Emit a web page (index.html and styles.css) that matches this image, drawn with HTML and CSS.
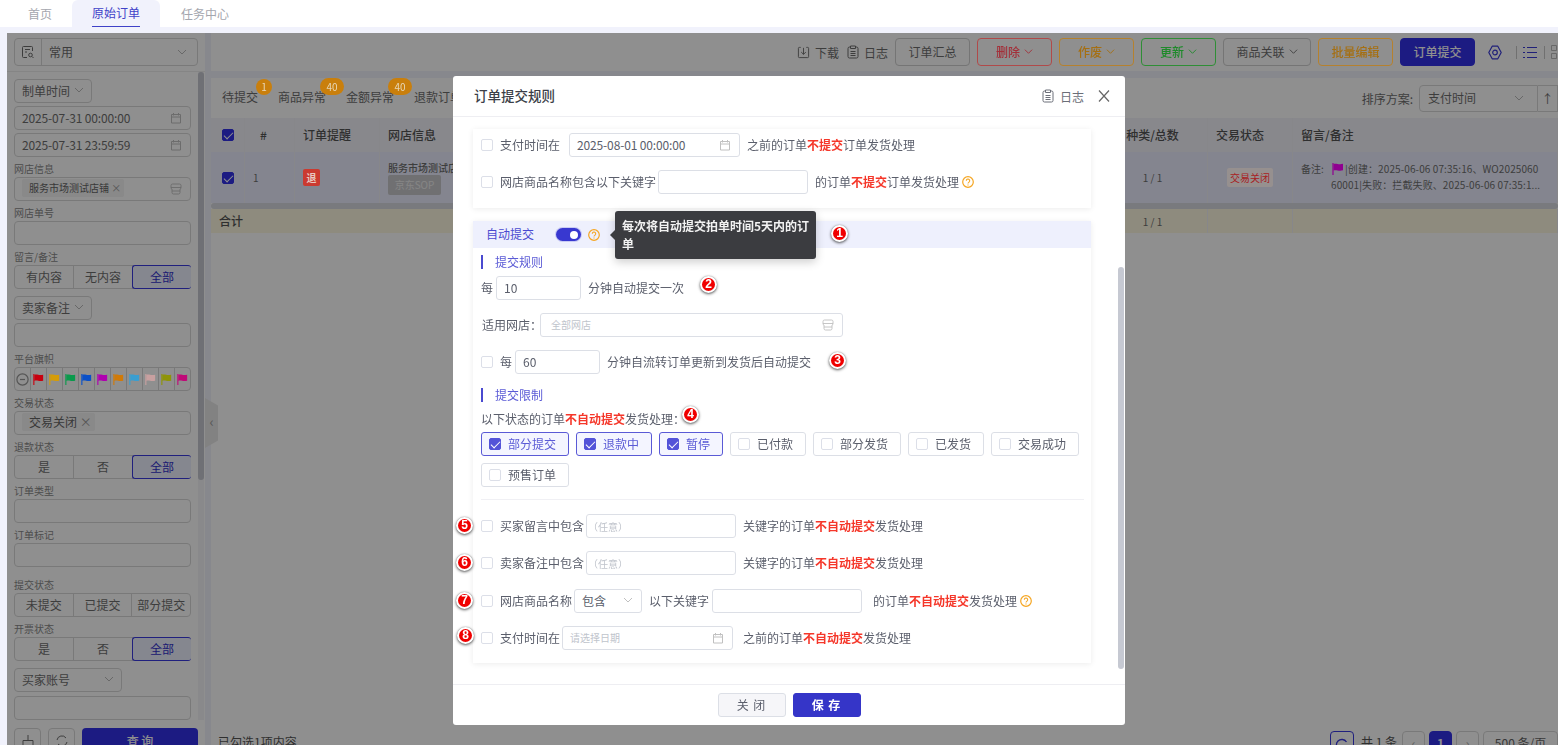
FILE: index.html
```html
<!DOCTYPE html>
<html lang="zh-CN">
<head>
  <meta charset="UTF-8">
  <meta name="viewport" content="width=device-width, initial-scale=1.0">
  <title>订单提交规则</title>
  <link rel="stylesheet" href="styles.css">
</head>
<body>
  <!-- icon sprite -->
  <svg class="sprite" xmlns="http://www.w3.org/2000/svg">
    <symbol id="i-cal" viewBox="0 0 12 12"><path d="M1.5 2.5h9v8.5h-9zM1.5 5h9M3.5 1v2.5M8.5 1v2.5" fill="none" stroke="currentColor"/></symbol>
    <symbol id="i-store" viewBox="0 0 12 12"><path d="M2.5 1h7a1.5 1.5 0 0 1 1.5 1.5V5a1.2 1.2 0 0 1-1 1v3.5A1.5 1.5 0 0 1 8.500 11h-5A1.500 1.500 0 0 1 2 9.500V6a1.200 1.200 0 0 1-1-1V2.500A1.500 1.500 0 0 1 2.500 1zM1 4.500h10M2 8h8" fill="none" stroke="currentColor" stroke-width=".9"/></symbol>
    <symbol id="i-chev" viewBox="0 0 10 10"><path d="M1 3l4 4 4-4" fill="none" stroke="currentColor"/></symbol>
    <symbol id="i-clip" viewBox="0 0 12 14"><path d="M3.500 2H2.500A1.500 1.500 0 0 0 1 3.500v8A1.500 1.500 0 0 0 2.500 13h7a1.500 1.500 0 0 0 1.500-1.500v-8A1.500 1.500 0 0 0 9.500 2H8.500M3.500 1h5v2.500h-5zM3.500 6.500h5M3.500 8.500h5M3.500 10.500h5" fill="none" stroke="currentColor"/></symbol>
    <symbol id="i-down" viewBox="0 0 14 14"><path d="M4 1.500H2.500a1 1 0 0 0-1 1v9a1 1 0 0 0 1 1h9a1 1 0 0 0 1-1v-9a1 1 0 0 0-1-1H10M7 2v7M4.500 6.500L7 9l2.500-2.500" fill="none" stroke="currentColor"/></symbol>
    <symbol id="i-help" viewBox="0 0 12 12"><circle cx="6" cy="6" r="5.300" fill="none" stroke="currentColor" stroke-width="1.200"/><path d="M4.300 4.700a1.700 1.700 0 1 1 2.700 1.400c-.7.500-1 .8-1 1.500M6 8.600v1" fill="none" stroke="currentColor" stroke-width="1.100"/></symbol>
    <symbol id="i-flag" viewBox="0 0 14 14"><path d="M2 1v12" fill="none" stroke="currentColor" stroke-width="1.200"/><path d="M2.500 2c3-1 5 1 9.500-.2v6.500c-4.500 1.200-6.500-.8-9.500.2z" fill="currentColor"/></symbol>
  </svg>

  <header class="topnav">
    <a class="topnav-item">首页</a>
    <a class="topnav-item active"><span>原始订单</span></a>
    <a class="topnav-item">任务中心</a>
  </header>

  <div class="layout">
    <aside class="side">
      <div class="side-top">
        <div class="picker">
          <span class="picker-icon">
            <svg width="14" height="14" viewBox="0 0 14 14" fill="none" stroke="currentColor"><path d="M11.500 6V2.500a1 1 0 0 0-1-1h-8a1 1 0 0 0-1 1v9a1 1 0 0 0 1 1H6M4 4.500h5M4 7h2"/><circle cx="9.500" cy="10" r="1.800"/><path d="M11 11.500l1.500 1.500"/></svg>
          </span>
          <span class="picker-text">常用</span>
          <svg class="chev" width="10" height="10"><use href="#i-chev"/></svg>
        </div>
      </div>
      <div class="side-form">
        <div class="sel sel-78">制单时间<svg class="chev" width="10" height="10"><use href="#i-chev"/></svg></div>
        <div class="box gap-3 date">2025-07-31 00:00:00<svg class="box-icon" width="12" height="12"><use href="#i-cal"/></svg></div>
        <div class="box gap-3 date">2025-07-31 23:59:59<svg class="box-icon" width="12" height="12"><use href="#i-cal"/></svg></div>

        <div class="lab">网店信息</div>
        <div class="box"><span class="pill">服务市场测试店铺 <i>×</i></span><svg class="box-icon" width="12" height="12"><use href="#i-store"/></svg></div>
        <div class="lab">网店单号</div>
        <div class="box"></div>
        <div class="lab">留言/备注</div>
        <div class="seg"><span>有内容</span><span>无内容</span><span class="on">全部</span></div>

        <div class="sel sel-78 gap-7">卖家备注<svg class="chev" width="10" height="10"><use href="#i-chev"/></svg></div>
        <div class="box gap-3"></div>
        <div class="lab">平台旗帜</div>
        <div class="flags">
          <span class="flag-none"><svg width="13" height="13" viewBox="0 0 13 13" fill="none" stroke="currentColor" stroke-width="1.200"><circle cx="6.500" cy="6.500" r="5.600"/><path d="M4 6.500h5"/></svg></span>
          <span class="flag c1"><svg width="13" height="13"><use href="#i-flag"/></svg></span>
          <span class="flag c2"><svg width="13" height="13"><use href="#i-flag"/></svg></span>
          <span class="flag c3"><svg width="13" height="13"><use href="#i-flag"/></svg></span>
          <span class="flag c4"><svg width="13" height="13"><use href="#i-flag"/></svg></span>
          <span class="flag c5"><svg width="13" height="13"><use href="#i-flag"/></svg></span>
          <span class="flag c6"><svg width="13" height="13"><use href="#i-flag"/></svg></span>
          <span class="flag c7"><svg width="13" height="13"><use href="#i-flag"/></svg></span>
          <span class="flag c8"><svg width="13" height="13"><use href="#i-flag"/></svg></span>
          <span class="flag c9"><svg width="13" height="13"><use href="#i-flag"/></svg></span>
          <span class="flag c10"><svg width="13" height="13"><use href="#i-flag"/></svg></span>
        </div>
        <div class="lab">交易状态</div>
        <div class="box"><span class="pill">交易关闭 <i>×</i></span></div>
        <div class="lab">退款状态</div>
        <div class="seg"><span>是</span><span>否</span><span class="on">全部</span></div>
        <div class="lab">订单类型</div>
        <div class="box"></div>
        <div class="lab">订单标记</div>
        <div class="box"></div>

        <div class="lab gap-10">提交状态</div>
        <div class="seg"><span>未提交</span><span>已提交</span><span>部分提交</span></div>
        <div class="lab">开票状态</div>
        <div class="seg"><span>是</span><span>否</span><span class="on">全部</span></div>

        <div class="sel sel-108 gap-7">买家账号<svg class="chev" width="10" height="10"><use href="#i-chev"/></svg></div>
        <div class="box gap-4"></div>

        <div class="side-btns">
          <span class="btn-sq">
            <svg width="14" height="14" viewBox="0 0 14 14" fill="none" stroke="currentColor"><path d="M7 1v5M2 6.500h10v6H2z"/></svg>
          </span>
          <span class="btn-sq">
            <svg width="14" height="14" viewBox="0 0 14 14" fill="none" stroke="currentColor"><path d="M2 6a5 5 0 0 1 9-2M12 8a5 5 0 0 1-9 2"/></svg>
          </span>
          <span class="btn-query">查 询</span>
        </div>
      </div>
      <div class="side-track"></div>
      <div class="side-thumb"></div>
    </aside>
    <div class="side-handle">‹</div>

    <main class="content">
      <div class="toolbar">
        <span class="tool-link"><svg width="13" height="13"><use href="#i-down"/></svg>下载</span>
        <span class="tool-link last"><svg width="12" height="14"><use href="#i-clip"/></svg>日志</span>
        <span class="tbtn w75">订单汇总</span>
        <span class="tbtn w75 red lift">删除<svg width="9" height="9"><use href="#i-chev"/></svg></span>
        <span class="tbtn w75 orange lift">作废<svg width="9" height="9"><use href="#i-chev"/></svg></span>
        <span class="tbtn w75 green lift">更新<svg width="9" height="9"><use href="#i-chev"/></svg></span>
        <span class="tbtn w88">商品关联<svg width="9" height="9"><use href="#i-chev"/></svg></span>
        <span class="tbtn w75 orange lift">批量编辑</span>
        <span class="tbtn w75 solid">订单提交</span>
        <svg class="tool-gear" width="14" height="15" viewBox="0 0 14 15" fill="none" stroke="currentColor" stroke-width="1.200"><path d="M4.200 1.200h5.600L13.200 7.500 9.800 13.800H4.200L.8 7.500z" stroke-linejoin="round"/><circle cx="7" cy="7.500" r="2.300"/></svg>
        <span class="tool-sep first"></span>
        <svg class="tool-list" width="14" height="13" viewBox="0 0 14 13" fill="none" stroke="currentColor"><path d="M0 1.500h2M4 1.500h10M0 6.500h2M4 6.500h10M0 11.500h2M4 11.500h10"/></svg>
        <span class="tool-sep"></span>
        <svg class="tool-grid" width="12" height="14" viewBox="0 0 12 14" fill="none" stroke="currentColor"><path d="M.5.500h5v5h-5zM.5 8.500h5v5h-5z"/></svg>
      </div>

      <section class="panel">
        <div class="tabs">
          <span class="tab">待提交<em class="tab-badge one">1</em></span>
          <span class="tab">商品异常<em class="tab-badge">40</em></span>
          <span class="tab">金额异常<em class="tab-badge">40</em></span>
          <span class="tab">退款订单</span>
          <div class="sort">
            <span>排序方案:</span>
            <div class="sort-sel">支付时间<svg class="chev" width="10" height="10"><use href="#i-chev"/></svg></div>
            <div class="sort-dir">↑</div>
          </div>
        </div>

        <div class="trow thead">
          <div class="cell"><span class="cb dark"></span></div>
          <div class="cell hash">#</div>
          <div class="cell">订单提醒</div>
          <div class="cell">网店信息</div>
          <div class="cell center">种类/总数</div>
          <div class="cell">交易状态</div>
          <div class="cell">留言/备注</div>
        </div>
        <div class="trow tbody">
          <div class="cell"><span class="cb dark"></span></div>
          <div class="cell">1</div>
          <div class="cell"><span class="tag-back lift">退</span></div>
          <div class="cell shop">
            <span class="shop-name">服务市场测试店铺</span>
            <span class="shop-tag">京东SOP</span>
          </div>
          <div class="cell center">1 / 1</div>
          <div class="cell center"><span class="tag-status lift">交易关闭</span></div>
          <div class="cell remark">
            <span class="remark-lab">备注:</span>
            <span class="remark-text"><svg class="remark-flag lift" width="14" height="14"><use href="#i-flag"/></svg>|创建：2025-06-06 07:35:16、WO2025060<br>60001|失败：拦截失败、2025-06-06 07:35:1...</span>
          </div>
        </div>
        <div class="tbar"></div>
        <div class="trow tfoot">
          <div class="cell sum">合计</div>
          <div class="cell center">1 / 1</div>
          <div class="cell"></div>
          <div class="cell"></div>
        </div>

        <div class="pager-row">
          <span>已勾选1项内容</span>
          <div class="pager">
            <span class="pg refresh">
              <svg width="14" height="14" viewBox="0 0 14 14" fill="none" stroke="currentColor" stroke-width="1.300"><path d="M11.500 4A5.500 5.500 0 1 0 12 9"/></svg>
            </span>
            <span class="pg-total">共 1 条</span>
            <span class="pg">‹</span>
            <span class="pg on">1</span>
            <span class="pg">›</span>
            <span class="pg size">500 条/页</span>
          </div>
        </div>
      </section>
    </main>
  </div>

  <div class="mask"></div>

  <div class="modal">
    <div class="modal-head">
      <span class="modal-title">订单提交规则</span>
      <span class="modal-log"><svg width="12" height="14"><use href="#i-clip"/></svg>日志</span>
      <svg class="modal-x" width="12" height="12" viewBox="0 0 12 12" fill="none" stroke="currentColor" stroke-width="1.200"><path d="M1 .5l10 11M11 .5L1 11.500"/></svg>
    </div>

    <div class="modal-body">
      <div class="card card-top">
        <div class="row">
          <span class="cb"></span><span class="t">支付时间在</span>
          <div class="inp w171 ml-9 mr-7 date">2025-08-01 00:00:00<svg class="box-icon" width="12" height="12"><use href="#i-cal"/></svg></div>
          <span>之前的订单<b>不提交</b>订单发货处理</span>
        </div>
        <div class="row mt-13">
          <span class="cb"></span><span class="t">网店商品名称包含以下关键字</span>
          <input class="inp w150 ml-2 mr-7">
          <span>的订单<b>不提交</b>订单发货处理</span>
          <svg class="help" width="12" height="12"><use href="#i-help"/></svg>
        </div>
      </div>

      <div class="card card-auto">
        <div class="auto-head">
          <span>自动提交</span>
          <span class="toggle"></span>
          <svg class="help" width="12" height="12"><use href="#i-help"/></svg>
        </div>
        <div class="tip">每次将自动提交拍单时间5天内的订<br>单</div>

        <div class="auto-body">
          <div class="sec-title">提交规则</div>
          <div class="row">
            <span>每</span>
            <input class="inp w85 ml-3 mr-7" value="10">
            <span>分钟自动提交一次</span>
          </div>
          <div class="row mt-13">
            <span class="shop-lab">适用网店：</span>
            <div class="inp w303 ph">全部网店<svg class="box-icon" width="12" height="12"><use href="#i-store"/></svg></div>
          </div>
          <div class="row mt-13">
            <span class="cb"></span><span class="t">每</span>
            <input class="inp w85 ml-3 mr-7" value="60">
            <span>分钟自流转订单更新到发货后自动提交</span>
          </div>

          <div class="sec-title mt-14">提交限制</div>
          <div class="hint">以下状态的订单<b>不自动提交</b>发货处理：</div>
          <div class="chips">
            <label class="chip on"><span class="cb"></span>部分提交</label>
            <label class="chip on"><span class="cb"></span>退款中</label>
            <label class="chip on"><span class="cb"></span>暂停</label>
            <label class="chip"><span class="cb"></span>已付款</label>
            <label class="chip"><span class="cb"></span>部分发货</label>
            <label class="chip"><span class="cb"></span>已发货</label>
            <label class="chip"><span class="cb"></span>交易成功</label>
            <label class="chip"><span class="cb"></span>预售订单</label>
          </div>
          <div class="rule"></div>

          <div class="row">
            <span class="cb"></span><span class="t">买家留言中包含</span>
            <input class="inp w150 ml-2 mr-7 kw" placeholder="（任意）">
            <span>关键字的订单<b>不自动提交</b>发货处理</span>
          </div>
          <div class="row mt-13">
            <span class="cb"></span><span class="t">卖家备注中包含</span>
            <input class="inp w150 ml-2 mr-7 kw" placeholder="（任意）">
            <span>关键字的订单<b>不自动提交</b>发货处理</span>
          </div>
          <div class="row mt-14">
            <span class="cb"></span><span class="t">网店商品名称</span>
            <div class="inp w68 ml-2 mr-7">包含<svg class="chev box-icon" width="10" height="10"><use href="#i-chev"/></svg></div>
            <span>以下关键字</span>
            <input class="inp w150 ml-3 mr-11">
            <span>的订单<b>不自动提交</b>发货处理</span>
            <svg class="help" width="12" height="12"><use href="#i-help"/></svg>
          </div>
          <div class="row mt-13">
            <span class="cb"></span><span class="t">支付时间在</span>
            <div class="inp w171 ml-2 mr-10 ph pl-7">请选择日期<svg class="box-icon" width="12" height="12"><use href="#i-cal"/></svg></div>
            <span>之前的订单<b>不自动提交</b>发货处理</span>
          </div>
        </div>

        <!-- numbered notes drawn on top of the form -->
        <span class="note n1">1</span>
        <span class="note n2">2</span>
        <span class="note n3">3</span>
        <span class="note n4">4</span>
        <span class="note n5">5</span>
        <span class="note n6">6</span>
        <span class="note n7">7</span>
        <span class="note n8">8</span>
      </div>

      <div class="modal-thumb"></div>
    </div>

    <div class="modal-foot">
      <span class="mbtn">关 闭</span>
      <span class="mbtn primary">保 存</span>
    </div>
  </div>
</body>
</html>
```

FILE: styles.css
```css
* {
  box-sizing: border-box;
}

html, body {
  height: 100%;
}

body {
  margin: 0;
  background-color: #f1f2fc;
  font-family: "Noto Sans CJK SC", "Noto Sans", sans-serif;
  font-size: 12px;
  color: #666;
  overflow: hidden;
}

.sprite {
  display: none;
}

.lift {
  position: relative;
  z-index: 11;
}

.date {
  letter-spacing: -0.14px;
}

/* Top navigation */
.topnav {
  display: flex;
  height: 27px;
  padding-left: 8px;
  background-color: #fff;
}

.topnav-item {
  display: flex;
  align-items: center;
  justify-content: center;
  padding: 0 20px;
  color: #a4a6ae;
  line-height: 26px;
}

.topnav-item.active {
  margin-right: 1px;
  background-color: #f1f2fc;
  border-radius: 6px 6px 0 0;
  color: #3f41c8;
  align-items: stretch;
}

.topnav-item.active span {
  border-bottom: 1px solid #3f41c8;
  height: 27px;
}

/* Page behind the dialog */
.layout {
  display: flex;
  height: 712px;
  margin-top: 6px;
  margin-left: 7px;
  color: #6e6e6e;
}

.side {
  position: relative;
  width: 198px;
  flex: none;
  background-color: #fff;
  overflow: hidden;
}

.side-top {
  height: 39px;
  padding: 5px 7px;
  border-bottom: 1px solid #eee;
}

.picker {
  display: flex;
  align-items: center;
  height: 28px;
  border: 1px solid #d8d8d8;
  border-radius: 4px;
}

.picker-icon {
  display: flex;
  align-items: center;
  justify-content: center;
  width: 27px;
  height: 100%;
  border-right: 1px solid #d8d8d8;
}

.picker-text {
  flex: 1;
  padding: 0 0 2px 7px;
}

.chev {
  margin-left: auto;
  color: #b9b9b9;
  flex: none;
}

.picker .chev {
  margin-right: 10px;
}

.side-form {
  width: 184px;
  padding: 7px 0 0 7px;
}

.sel, .box {
  position: relative;
  display: flex;
  align-items: center;
  height: 24px;
  border: 1px solid #d8d8d8;
  border-radius: 4px;
  padding: 0 7px 2px;
  background-color: #fff;
}

.box {
  width: 177px;
}

.sel-78 {
  width: 78px;
}

.sel-108 {
  width: 108px;
}

.box-icon {
  position: absolute;
  right: 8px;
  top: 5px;
  color: #c0c0c0;
}

.gap-3 { margin-top: 3px; }
.gap-4 { margin-top: 4px; }
.gap-7 { margin-top: 7px; }
.gap-10 { margin-top: 10px !important; }

.lab {
  margin-top: 4px;
  font-size: 10px;
  line-height: 16px;
  color: #8a8a8a;
}

.pill {
  padding: 0 3px 0 7px;
  background-color: #f4f4f4;
  border-radius: 2px;
  line-height: 18px;
  font-size: 10px;
  color: #666;
}

.box .pill:last-child {
  font-size: 12px;
}

.pill i {
  font-style: normal;
  color: #999;
}

.seg {
  display: flex;
  width: 177px;
  height: 24px;
  border: 1px solid #d8d8d8;
  border-radius: 4px;
}

.seg span {
  flex: 1;
  display: flex;
  align-items: center;
  justify-content: center;
  padding-bottom: 2px;
  border-right: 1px solid #d8d8d8;
}

.seg span:last-child {
  border-right: 0;
}

.seg .on {
  margin: -1px;
  border: 1px solid #3a3ae0;
  border-radius: 3px;
  background-color: #eef0ff;
  color: #3333cc;
}

.flags {
  display: flex;
  width: 177px;
  height: 24px;
  margin-bottom: 1px;
  border: 1px solid #d8d8d8;
  border-radius: 4px;
}

.flags span {
  flex: 1;
  display: flex;
  align-items: center;
  justify-content: center;
  border-right: 1px solid #d8d8d8;
}

.flags span:last-child {
  border-right: 0;
}

.flags svg {
  position: relative;
  z-index: 11;
}

.flag-none { color: #555; }
.c1 { color: #c8000f; }
.c2 { color: #d59c08; }
.c3 { color: #0a9a4c; }
.c4 { color: #0a50c8; }
.c5 { color: #b000b0; }
.c6 { color: #d07a08; }
.c7 { color: #3a9ed0; }
.c8 { color: #c8a0a0; }
.c9 { color: #8f9408; }
.c10 { color: #c00a78; }

.side-btns {
  display: flex;
  gap: 7px;
  width: 184px;
  margin-top: 8px;
}

.btn-sq {
  display: flex;
  justify-content: center;
  width: 27px;
  height: 28px;
  padding-top: 5px;
  border: 1px solid #d8d8d8;
  border-radius: 4px;
}

.btn-query {
  flex: 1;
  height: 28px;
  border-radius: 4px;
  background-color: #3331e8;
  color: #fff;
  text-align: center;
  line-height: 26px;
  font-weight: 500;
}

.side-track {
  position: absolute;
  left: 191px;
  top: 39px;
  width: 6px;
  height: 648px;
  background-color: #f4f4f8;
}

.side-thumb {
  position: absolute;
  left: 191px;
  top: 39px;
  width: 6px;
  height: 408px;
  border-radius: 3px;
  background-color: #c6c8d0;
}

.side-handle {
  position: absolute;
  left: 205px;
  top: 398px;
  width: 13px;
  height: 50px;
  background-color: #e8e8e8;
  clip-path: polygon(0 0, 100% 15%, 100% 85%, 0 100%);
  color: #999;
  font-size: 14px;
  line-height: 46px;
  text-align: center;
}

.content {
  flex: 1;
  min-width: 0;
  margin-left: 6px;
  display: flex;
  flex-direction: column;
}

/* Toolbar */
.toolbar {
  display: flex;
  align-items: center;
  height: 38px;
  padding-left: 586px;
  background-color: #fff;
  overflow: hidden;
  flex: none;
}

.tool-link {
  display: flex;
  align-items: center;
  gap: 5px;
  margin-right: 8px;
  white-space: nowrap;
}

.tool-link.last {
  margin-right: 7px;
}

.tbtn {
  display: flex;
  align-items: center;
  justify-content: center;
  gap: 4px;
  flex: none;
  height: 28px;
  margin-right: 7px;
  padding-bottom: 2px;
  border: 1px solid #d0d0d0;
  border-radius: 4px;
  white-space: nowrap;
}

.w75 { width: 75px; }
.w88 { width: 88px; }

.tbtn.red {
  border-color: #b04a4a;
  color: #a3303a;
  font-weight: 500;
}

.tbtn.orange {
  border-color: #b5812e;
  color: #a56f12;
  font-weight: 500;
}

.tbtn.green {
  border-color: #2f8e36;
  color: #1e8a2a;
  font-weight: 500;
}

.tbtn.solid {
  background-color: #3331e8;
  border-color: #3331e8;
  color: #fff;
  font-weight: 500;
}

.tool-gear {
  margin-left: 6px;
  flex: none;
  color: #3a3ad8;
}

.tool-sep {
  flex: none;
  width: 1px;
  height: 13px;
  margin: 0 6px 0 7px;
  background-color: #c8c8c8;
}

.tool-sep.first {
  margin-left: 14px;
}

.tool-list {
  flex: none;
  color: #3a3ad8;
}

.tool-grid {
  flex: none;
  color: #bbb;
}

/* Order list */
.panel {
  flex: 1;
  margin-top: 7px;
  display: flex;
  flex-direction: column;
  background-color: #fff;
  overflow: hidden;
}

.tabs {
  display: flex;
  gap: 20px;
  height: 40px;
  padding-left: 11px;
  flex: none;
}

.tab {
  position: relative;
  padding-top: 10px;
  line-height: 18px;
  white-space: nowrap;
}

.tab-badge {
  position: absolute;
  z-index: 11;
  left: 42px;
  top: 0;
  width: 24px;
  height: 17px;
  border-radius: 9px;
  background-color: #c97f0c;
  color: #e8d8b8;
  font-style: normal;
  font-size: 10px;
  line-height: 17px;
  text-align: center;
}

.tab-badge.one {
  left: 34px;
  top: 1px;
  width: 16px;
  height: 16px;
  line-height: 16px;
}

.sort {
  display: flex;
  align-items: center;
  height: 27px;
  margin: 7px 0 0 auto;
}

.sort > span {
  margin-right: 6px;
  white-space: nowrap;
}

.sort-sel {
  display: flex;
  align-items: center;
  width: 119px;
  height: 27px;
  padding: 0 8px 2px;
  border: 1px solid #d8d8d8;
  border-radius: 4px 0 0 4px;
}

.sort-sel .chev {
  margin-right: 5px;
}

.sort-dir {
  width: 20px;
  height: 27px;
  border: 1px solid #d8d8d8;
  border-left: 0;
  text-align: center;
  line-height: 25px;
}

.trow {
  display: grid;
  grid-template-columns: 34px 50px 85px 718px 110px 85px 265px;
  flex: none;
}

.cell {
  display: flex;
  align-items: center;
  padding: 0 8px;
  border-right: 1px solid #f0f0f6;
  white-space: nowrap;
  overflow: hidden;
}

.cell.center {
  justify-content: center;
}

.thead {
  height: 34px;
  background-color: #f2f3fa;
  color: #555;
  font-weight: 500;
}

.thead .cell {
  padding-bottom: 2px;
}

.thead .hash {
  padding-left: 15px;
}

.tbody {
  height: 51px;
  background-color: #eceeff;
  font-size: 10px;
}

.tbody .cell:first-child, .thead .cell:first-child {
  padding: 0 0 0 11px;
}

.tag-back {
  width: 17px;
  height: 17px;
  border-radius: 2px;
  background-color: #cb3a30;
  color: #e8c8c0;
  text-align: center;
  line-height: 17px;
  font-size: 10px;
  font-weight: 700;
}

.shop {
  flex-direction: column;
  align-items: flex-start;
  justify-content: center;
}

.shop-name {
  font-weight: 500;
  line-height: 14px;
}

.shop-tag {
  width: 53px;
  height: 20px;
  border-radius: 2px;
  background-color: #c8c8cc;
  color: #eee;
  text-align: center;
  line-height: 20px;
}

.tag-status {
  padding: 0 3px;
  height: 19px;
  background-color: #96908f;
  border-radius: 2px;
  color: #a8201f;
  line-height: 19px;
}

.remark {
  align-items: flex-start;
  padding-top: 9px;
  line-height: 16px;
}

.remark-lab {
  width: 30px;
  flex: none;
}

.remark-text {
  letter-spacing: 0.1px;
}

.remark-flag {
  color: #900090;
  vertical-align: -3px;
}

.tbar {
  height: 6px;
  flex: none;
  background-color: #d8dae0;
  border-radius: 3px;
}

.tfoot {
  grid-template-columns: 887px 110px 85px 265px;
  height: 24px;
  background-color: #fdf8e0;
}

.tfoot .sum {
  font-weight: 500;
  color: #555;
  padding-bottom: 2px;
}

.tfoot .center {
  font-size: 10px;
}

.pager-row {
  display: flex;
  height: 14px;
  margin-top: auto;
  padding-left: 7px;
  line-height: 22px;
  color: #555;
  flex: none;
}

.pager {
  display: flex;
  gap: 4px;
  margin-left: auto;
}

.pg {
  display: block;
  width: 23px;
  height: 24px;
  border: 1px solid #d8d8d8;
  border-radius: 4px;
  text-align: center;
  color: #aaa;
}

.pg.on {
  background-color: #3331e8;
  border-color: #3331e8;
  color: #fff;
  font-weight: 700;
}

.pg.refresh {
  width: 24px;
  border-color: #3a3ae0;
  color: #3a3ae0;
  padding-top: 4px;
}

.pg-total {
  margin: 0 1px 0 3px;
  white-space: nowrap;
}

.pg.size {
  width: 75px;
  color: #666;
  white-space: nowrap;
}

/* Overlay */
.mask {
  position: fixed;
  left: 7px;
  top: 33px;
  right: 0;
  bottom: 0;
  z-index: 10;
  background-color: rgba(0, 0, 0, 0.44);
}

.modal {
  position: fixed;
  left: 453px;
  top: 76px;
  z-index: 20;
  display: flex;
  flex-direction: column;
  width: 672px;
  height: 649px;
  background-color: #fff;
  border-radius: 3px;
  color: #5a5e6b;
}

.modal-head {
  display: flex;
  align-items: center;
  flex: none;
  height: 41px;
  padding: 0 15px 0 21px;
  border-bottom: 1px solid #eeeef2;
}

.modal-title {
  padding-bottom: 2px;
  font-size: 13.500px;
  font-weight: 500;
  color: #3c3f48;
}

.modal-log {
  display: flex;
  align-items: center;
  gap: 6px;
  margin-left: auto;
  color: #6b6e78;
}

.modal-x {
  margin-left: 14px;
  color: #666;
}

.modal-body {
  position: relative;
  flex: 1;
  padding: 12px 0 0 20px;
}

.modal-thumb {
  position: absolute;
  right: 1px;
  top: 150px;
  width: 6px;
  height: 402px;
  border-radius: 3px;
  background-color: #c6c9d2;
}

.card {
  width: 618px;
  background-color: #fff;
  box-shadow: 0 1px 6px rgba(0, 0, 0, 0.08);
}

.card-top {
  padding: 4px 0 14px 8px;
}

.card-auto {
  position: relative;
  margin-top: 13px;
}

.row {
  display: flex;
  align-items: center;
  height: 24px;
  white-space: nowrap;
}

.row > span:not(.cb) {
  padding-bottom: 2px;
}

.cb {
  display: inline-block;
  position: relative;
  width: 12px;
  height: 12px;
  flex: none;
  border: 1px solid #dcdfe8;
  border-radius: 2px;
  background-color: #fff;
}

.t {
  margin-left: 7px;
}

.row b, .hint b {
  color: #f5372a;
  font-weight: 700;
}

.inp {
  position: relative;
  display: flex;
  align-items: center;
  height: 24px;
  padding: 0 7px 2px;
  border: 1px solid #dcdfe6;
  border-radius: 3px;
  background-color: #fff;
  font: inherit;
  color: #5a5e6b;
  outline: none;
  flex: none;
}

.ph {
  font-size: 10px;
  color: #c0c4cc;
  padding-left: 10px;
}

.ph.pl-7 {
  padding-left: 7px;
}

.kw {
  padding-left: 1px;
}

.kw::placeholder {
  font-size: 10px;
  color: #c0c4cc;
}

.w68 { width: 68px; }
.w85 { width: 85px; }
.w150 { width: 150px; }
.w171 { width: 171px; }
.w303 { width: 303px; }

.ml-2 { margin-left: 2px; }
.ml-3 { margin-left: 3px; }
.ml-9 { margin-left: 9px; }
.mr-7 { margin-right: 7px; }
.mr-10 { margin-right: 10px; }
.mr-11 { margin-right: 11px; }
.mt-13 { margin-top: 13px; }
.mt-14 { margin-top: 14px !important; }

.help {
  margin-left: 3px;
  flex: none;
  color: #f5a623;
}

.auto-head {
  display: flex;
  align-items: center;
  height: 27px;
  padding-left: 13px;
  background-color: #eef0fd;
  color: #4a4ad0;
}

.auto-head > span:first-child {
  padding-bottom: 2px;
}

.auto-head .help {
  margin-left: 7px;
}

.toggle {
  display: flex;
  align-items: center;
  justify-content: flex-end;
  width: 25px;
  height: 13px;
  margin-left: 22px;
  padding-right: 3px;
  border-radius: 7px;
  background-color: #3838d0;
  box-shadow: 0 0 0 1px rgba(56, 56, 208, 0.2);
}

.toggle::after {
  content: "";
  width: 8px;
  height: 8px;
  border-radius: 50%;
  background-color: #fff;
}

.tip {
  position: absolute;
  z-index: 2;
  left: 142px;
  top: -10px;
  width: 201px;
  height: 48px;
  padding: 6px 7px;
  border-radius: 3px;
  background-color: #3b3c40;
  color: #f2f2f2;
  font-weight: 700;
  line-height: 18px;
  white-space: nowrap;
  box-shadow: 0 3px 10px rgba(0, 0, 0, 0.2);
}

.tip::before {
  content: "";
  position: absolute;
  left: -5px;
  top: 19px;
  border-style: solid;
  border-width: 5px 5px 5px 0;
  border-color: transparent #3b3c40 transparent transparent;
}

.auto-body {
  padding: 7px 7px 13px 8px;
}

.sec-title {
  height: 14px;
  margin-bottom: 7px;
  padding-left: 12px;
  border-left: 2px solid #4a4ad0;
  color: #5b5bd6;
  line-height: 14px;
}

.shop-lab {
  width: 59px;
  padding-left: 1px;
}

.hint {
  height: 16px;
  line-height: 14px;
  white-space: nowrap;
}

.sec-title + .hint {
  margin-top: 10px;
}

.chips {
  display: flex;
  flex-wrap: wrap;
  gap: 7px;
  margin-top: 4px;
}

.chip {
  display: flex;
  align-items: center;
  gap: 7px;
  height: 24px;
  padding: 0 12px 2px 7px;
  border: 1px solid #dcdfe6;
  border-radius: 3px;
}

.chip .cb {
  margin-top: 2px;
}

.chip.on {
  border-color: #5a5ad6;
  background-color: #f4f5ff;
  color: #5b5bd6;
}

.chip.on .cb {
  background-color: #5353d8;
  border-color: #5353d8;
}

.chip.on .cb::after, .cb.dark::after {
  content: "";
  position: absolute;
  left: 3px;
  top: 0;
  width: 4px;
  height: 8px;
  border: solid #fff;
  border-width: 0 1.500px 1.500px 0;
  transform: rotate(45deg);
}

.cb.dark {
  background-color: #3331e8;
  border-color: #3331e8;
}

.rule {
  height: 1px;
  margin: 12px 0 14px;
  background-color: #f0f0f4;
}

.note {
  position: absolute;
  z-index: 3;
  width: 17px;
  height: 17px;
  border: 2px solid #fff;
  border-radius: 50%;
  background-color: #f00000;
  box-shadow: 0 1px 3px rgba(0, 0, 0, 0.65), 0 0 1px rgba(0, 0, 0, 0.4);
  color: #fff;
  font-family: "Liberation Sans", sans-serif;
  font-size: 12px;
  font-weight: 700;
  line-height: 13px;
  text-align: center;
}

/* placed on centre - card origin - half of the 17px badge */
.n1 { left: 358px; top: 4px; }
.n2 { left: 227px; top: 55px; }
.n3 { left: 356px; top: 131px; }
.n4 { left: 209px; top: 185px; }
.n5 { left: -17px; top: 296px; }
.n6 { left: -17px; top: 333px; }
.n7 { left: -17px; top: 371px; }
.n8 { left: -16px; top: 406px; }

.modal-foot {
  display: flex;
  justify-content: center;
  gap: 7px;
  flex: none;
  height: 41px;
  padding-top: 8px;
  border-top: 1px solid #eeeef2;
}

.mbtn {
  width: 68px;
  height: 24px;
  border: 1px solid #dcdfe6;
  border-radius: 3px;
  background-color: #f6f6f9;
  text-align: center;
  line-height: 22px;
  letter-spacing: 1px;
}

.mbtn.primary {
  background-color: #3535c8;
  border-color: #3535c8;
  color: #fff;
  font-weight: 700;
}
```
